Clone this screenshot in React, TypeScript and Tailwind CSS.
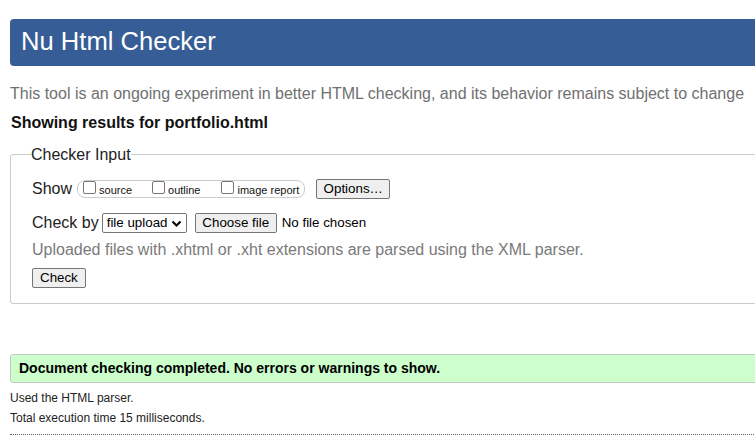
import React from "react";

function Box() {
  return <span className="inline-block w-[13px] h-[13px] border border-[#767676] rounded-[2px] bg-white shrink-0" />;
}

function Opt({ label, className = "" }: { label: string; className?: string }) {
  return (
    <span className={"flex items-baseline " + className}>
      <Box />
      <span className="ml-[3px] text-[11px] leading-[13px] text-[#111]">{label}</span>
    </span>
  );
}

export default function App() {
  return (
    <div className="w-[755px] h-[442px] overflow-hidden bg-white font-['Liberation_Sans',Arial,sans-serif] text-[#111]">
      <div className="w-[900px] pl-[10px] pt-[19px]">
        <h1 className="h-[47px] bg-[#365d95] rounded-[4px] flex items-center pl-[11px] pb-[3px] text-white text-[25.6px] font-normal">
          Nu Html Checker
        </h1>
        <p className="mt-[18px] text-[16px] leading-[20px] text-[#707070]">
          This tool is an ongoing experiment in better HTML checking, and its behavior remains subject to change
        </p>
        <p className="mt-[9px] text-[16px] leading-[20px] font-bold pl-[1px] text-[#111]">
          Showing results for portfolio.html
        </p>
        <fieldset className="mt-[12px] border border-[#ccc] rounded-[3px] pl-[21px] pt-[15px] pb-[15px] w-[880px]">
          <legend className="-ml-px text-[16px] leading-[19px] text-[#222]">Checker Input</legend>
          <div className="flex items-center h-[20px]">
            <span className="text-[16px] leading-[20px] text-[#222]">Show</span>
            <span className="ml-[5px] h-[18px] border border-[#ccc] rounded-[8px] flex items-start pl-[5px] pr-[5px]">
              <Opt label="source" />
              <Opt label="outline" className="ml-[20px]" />
              <Opt label="image report" className="ml-[21px]" />
            </span>
            <span className="ml-[11px] h-[20px] w-[74px] border border-[#767676] rounded-[2px] bg-[#efefef] flex items-center justify-center text-[13.33px] text-black">
              Options…
            </span>
          </div>
          <div className="flex items-center h-[20px] mt-[14px]">
            <span className="text-[16px] leading-[20px] text-[#222]">Check by</span>
            <span className="ml-[3px] h-[20px] w-[85px] border border-[#767676] rounded-[2px] bg-white flex items-center pl-[4px] pr-[4px] text-[13.33px] text-black">
              <span className="flex-1">file upload</span>
              <svg width="11" height="8" viewBox="0 0 11 8" className="mt-[1px]">
                <polyline points="1.5,1.5 5.5,5.5 9.5,1.5" fill="none" stroke="#000" strokeWidth="2" />
              </svg>
            </span>
            <span className="ml-[8px] h-[20px] w-[82px] border border-[#767676] rounded-[2px] bg-[#efefef] flex items-center justify-center text-[13.33px] text-black">
              Choose file
            </span>
            <span className="ml-[5px] text-[13.33px] text-black">No file chosen</span>
          </div>
          <p className="mt-[7px] text-[16px] leading-[20px] text-[#7a7a7a]">
            Uploaded files with .xhtml or .xht extensions are parsed using the XML parser.
          </p>
          <div className="mt-[8px] flex">
            <span className="h-[20px] px-[7px] border border-[#767676] rounded-[2px] bg-[#efefef] flex items-center text-[13.33px] text-black">
              Check
            </span>
          </div>
        </fieldset>
        <div className="mt-[50px] border border-[#c6c6c6] rounded-[3px] bg-[#ccffcc] pl-[8px] py-[5px] text-[14px] leading-[17px] font-bold text-black">
          Document checking completed. No errors or warnings to show.
        </div>
        <p className="mt-[8px] text-[12px] leading-[15px] text-[#222]">Used the HTML parser.</p>
        <p className="mt-[5px] text-[12px] leading-[15px] text-[#222]">Total execution time 15 milliseconds.</p>
        <div className="mt-[8px] border-t border-dotted border-[#666]" />
      </div>
    </div>
  );
}
